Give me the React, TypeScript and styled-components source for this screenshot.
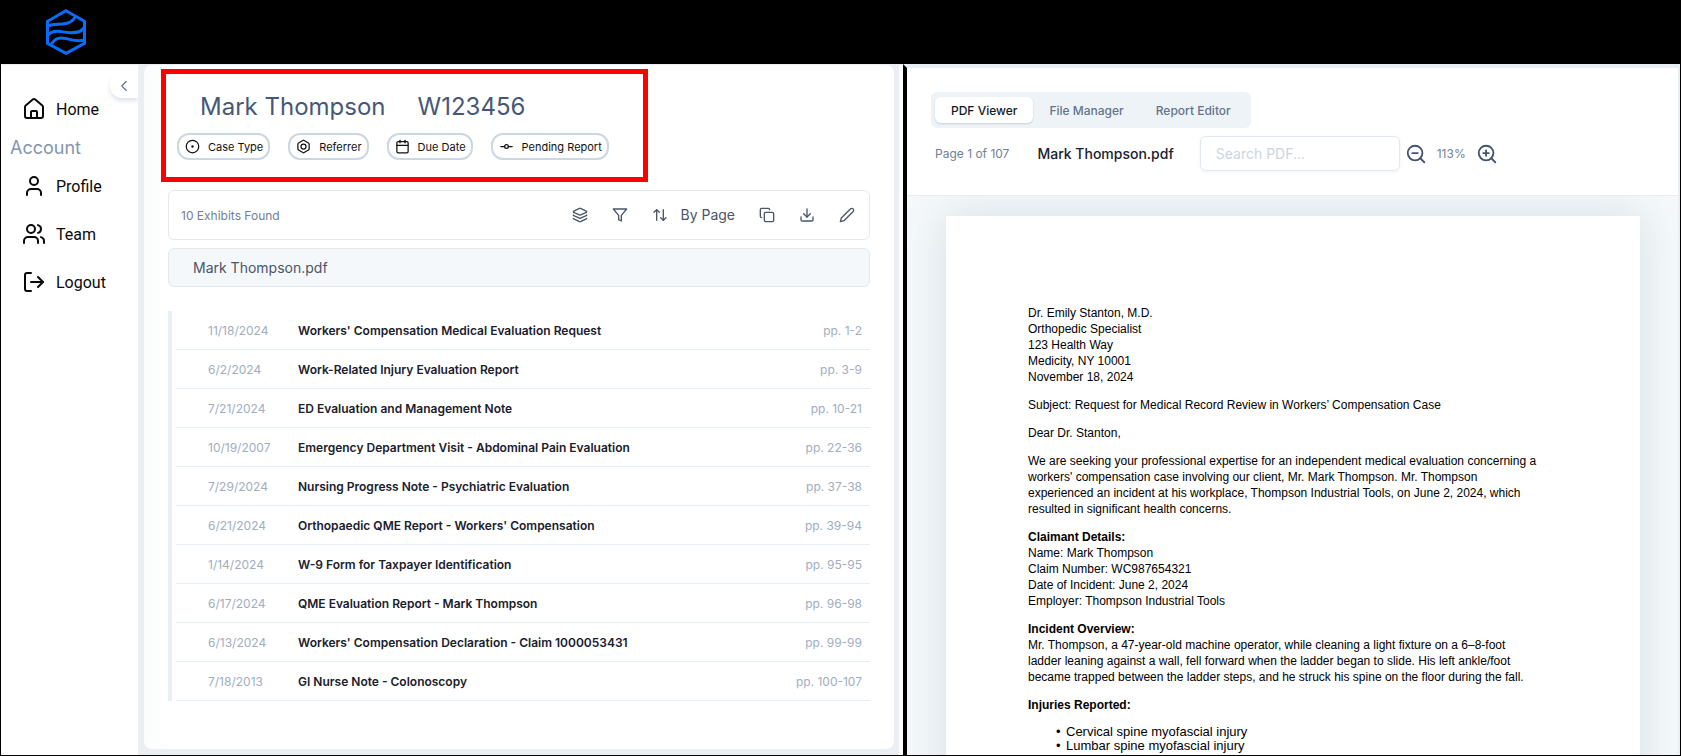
import React from "react";
import styled, { createGlobalStyle } from "styled-components";
import {
  ArrowUpDown,
  Bolt,
  Calendar,
  ChevronLeft,
  CircleDot,
  Copy,
  Download,
  GitCommitHorizontal,
  Layers,
  LogOut,
  User,
  Users,
  ZoomIn,
  ZoomOut,
} from "lucide-react";

const ui = `Inter, "Liberation Sans", sans-serif`;

const GlobalStyle = createGlobalStyle`
  * { box-sizing: border-box; }
  body { margin: 0; background: #fff; font-family: ${ui}; }
  button { font-family: inherit; cursor: pointer; }
`;

const Shell = styled.div`
  display: flex;
  flex-direction: column;
  height: 100vh;
  overflow: hidden;
`;

const TopBar = styled.header`
  flex: none;
  height: 64px;
  padding: 9px 46px;
  background: #000;
`;

const Workspace = styled.div`
  flex: 1;
  min-height: 0;
  display: grid;
  grid-template-columns: minmax(0, 902fr) minmax(0, 777fr);
  border: solid #000;
  border-width: 0 1px 1px;
`;

const LeftPane = styled.div`
  display: flex;
  min-height: 0;
  padding-right: 4px;
  border-top: 1px solid #e8edf2;
`;

const Sidebar = styled.nav`
  flex: none;
  display: flex;
  flex-direction: column;
  width: 137px;
`;

const CollapseButton = styled.button`
  display: grid;
  place-items: center;
  align-self: flex-end;
  width: 28px;
  height: 25px;
  margin-top: 8px;
  padding: 0;
  border: 0;
  border-radius: 12px 0 0 12px;
  background: #fff;
  color: #5f6f89;
  box-shadow: 0 3px 4px rgba(30, 50, 70, 0.14);
`;

const NavList = styled.ul`
  margin: 0;
  padding: 0;
  list-style: none;
`;

const NavLink = styled.a`
  display: flex;
  align-items: center;
  gap: 10px;
  height: 48px;
  padding-left: 21px;
  color: #0a0a0a;
  font-family: Roboto, sans-serif;
  font-size: 16px;
  text-decoration: none;
`;

const NavHome = styled(NavLink)`
  height: 22px;
`;

const NavHeading = styled.h2`
  margin: 16px 0 2px;
  padding-left: 9px;
  color: #8296ac;
  font-size: 18px;
  font-weight: 400;
  line-height: 24px;
`;

const Backdrop = styled.main`
  flex: 1;
  min-width: 0;
  display: flex;
  padding: 0 5px 6px 6px;
  background: #ebeff3;
`;

const CasePanel = styled.div`
  flex: 1;
  min-width: 0;
  padding: 4px 24px 0 17px;
  border-radius: 8px;
  background: linear-gradient(90deg, #fbfcfc, #fff 24px);
`;

const CaseHeader = styled.section`
  max-width: 487px;
  height: 113px;
  padding: 17px 11px;
  border: 5px solid #f00;
`;

const CaseTitle = styled.h1`
  display: flex;
  gap: 32px;
  margin: 0;
  padding-left: 23px;
  color: #475876;
  font-size: 24px;
  font-weight: 400;
  line-height: 32px;
`;

const Chips = styled.div`
  display: flex;
  gap: 18px;
  margin-top: 10px;
`;

const Chip = styled.button`
  display: flex;
  align-items: center;
  gap: 8px;
  height: 27px;
  padding: 0 5px 0 6px;
  border: 2px solid #cbd7e3;
  border-radius: 12px;
  background: #fff;
  color: #111;
  font-size: 11px;
  white-space: nowrap;
`;

const Exhibits = styled.section`
  margin: 8px 0 0 7px;
`;

const ExhibitBar = styled.div`
  display: flex;
  align-items: center;
  justify-content: space-between;
  height: 50px;
  padding: 0 14px 0 12px;
  border: 1px solid #e4e8ec;
  border-radius: 6px;
  background: #fff;
`;

const Muted = styled.span`
  color: #718096;
  font-size: 12px;
  white-space: nowrap;
`;

const Tools = styled.div`
  display: flex;
  align-items: center;
  gap: 24px;
`;

const Tool = styled.button`
  display: flex;
  align-items: center;
  gap: 12px;
  padding: 0;
  border: 0;
  background: none;
  color: #4a5568;
  font-size: 14px;
  line-height: 20px;
  white-space: nowrap;
`;

const FileRow = styled.h2`
  margin: 8px 0 0;
  padding: 0 24px;
  border: 1px solid #e2e8ee;
  border-radius: 6px;
  background: #f5f8fb;
  color: #4a5568;
  font-size: 14px;
  font-weight: 400;
  line-height: 37px;
`;

const ExhibitList = styled.div`
  margin-top: 24px;
  padding-left: 4px;
  border-left: 4px solid #e8eff5;
`;

const Table = styled.table`
  width: 100%;
  border-spacing: 0;
  font-size: 12px;
`;

const Cell = styled.td`
  height: 39px;
  padding: 0;
  border-bottom: 1px solid #e6edf3;
  color: #a0aec0;
  white-space: nowrap;
`;

const DateCell = styled(Cell)`
  width: 122px;
  padding-left: 32px;
`;

const TitleCell = styled(Cell)`
  color: #1a202c;
  font-weight: 600;
`;

const PagesCell = styled(Cell)`
  padding-right: 8px;
  text-align: right;
`;

const Viewer = styled.section`
  display: flex;
  flex-direction: column;
  min-height: 0;
  border: solid #e8eff4;
  border-width: 4px 2px 0 4px;
  border-left-color: #000;
`;

const ViewerHead = styled.div`
  flex: none;
  display: flex;
  flex-direction: column;
  align-items: flex-start;
  gap: 8px;
  padding: 24px;
  border-bottom: 1px solid #e6ecf0;
`;

const Tabs = styled.div`
  display: flex;
  padding: 5px 4px;
  border-radius: 6px;
  background: #eef3f7;
`;

const Tab = styled.button<{ $active?: boolean }>`
  height: 26px;
  padding: 0 16px;
  border: 0;
  border-radius: 6px;
  background: ${(p) => (p.$active ? "#fff" : "transparent")};
  box-shadow: ${(p) => (p.$active ? "0 1px 2px rgba(20, 40, 60, 0.18)" : "none")};
  color: ${(p) => (p.$active ? "#111827" : "#64748b")};
  font-size: 12px;
  font-weight: 500;
  white-space: nowrap;
`;

const ViewerTools = styled.div`
  display: flex;
  align-items: center;
  padding-left: 4px;
`;

const FileName = styled.span`
  margin: 0 26px 0 28px;
  color: #1a202c;
  font-size: 14px;
  font-weight: 500;
  white-space: nowrap;
`;

const SearchBox = styled.input`
  width: 200px;
  height: 35px;
  padding: 0 15px;
  border: 1px solid #e2e8f0;
  border-radius: 6px;
  background: #fff;
  box-shadow: 0 1px 4px rgba(30, 60, 90, 0.06);
  color: #1a202c;
  font-family: inherit;
  font-size: 14px;
  &::placeholder { color: #cbd5e0; }
`;

const ZoomGroup = styled.div`
  display: flex;
  align-items: center;
  gap: 10px;
  margin-left: 5px;
`;

const IconButton = styled.button`
  display: flex;
  padding: 0;
  border: 0;
  background: none;
  color: #44546f;
`;

const Canvas = styled.div`
  flex: 1;
  min-height: 0;
  overflow: hidden;
  padding: 20px 38px 0 39px;
  background: #f5f9fb;
`;

const Paper = styled.article`
  min-height: 1000px;
  padding: 89px 78px 0 82px;
  background: #fff;
  box-shadow: 0 0 40px 4px rgba(70, 100, 115, 0.15);
  color: #000;
  font-family: "Liberation Sans", Arial, sans-serif;
  font-size: 12px;
  line-height: 16px;
  white-space: nowrap;
  p { margin: 0 0 12px; }
`;

const Injuries = styled.ul`
  margin: 0;
  padding-left: 38px;
  font-size: 13px;
  line-height: 14px;
  list-style: none;
  li::before { content: "•"; display: inline-block; width: 0; margin-left: -10px; margin-right: 10px; }
`;

const Logo = () => (
  <svg width="40" height="46" viewBox="0 0 40 46" fill="none" stroke="#0a6cff" strokeWidth="3" role="img" aria-label="Logo">
    <path d="M20 1.8 38.5 12.3V34.3L20 44.4 1.5 34.3V12.3Z" />
    <path d="M1.5 17C9 14 14 16.500 21 14.300C25 13 28 10.500 29.300 7.500" />
    <path d="M1.500 26.500C4 23.500 9 21.800 15 22.600C24 24.300 35 25 38.500 18" />
    <path d="M5.500 35C8.500 29.500 14 28 20 29.600C26 31.200 32 32.800 38.500 31" />
  </svg>
);

const HomeIcon = () => (
  <svg width="24" height="24" viewBox="0 0 24 24" fill="none" stroke="currentColor" strokeWidth="2" strokeLinecap="round" strokeLinejoin="round">
    <path d="M3 10a2 2 0 0 1 .709-1.528l7-5.999a2 2 0 0 1 2.582 0l7 5.999A2 2 0 0 1 21 10v9a2 2 0 0 1-2 2H5a2 2 0 0 1-2-2z" />
    <path d="M15 21v-6a1 1 0 0 0-1-1h-4a1 1 0 0 0-1 1v6" />
  </svg>
);

const FilterIcon = () => (
  <svg width="16" height="16" viewBox="0 0 24 24" fill="none" stroke="currentColor" strokeWidth="2" strokeLinejoin="round">
    <path d="M22 3H2l8 9.460V19l4 2v-8.540z" />
  </svg>
);

const PencilIcon = () => (
  <svg width="16" height="16" viewBox="0 0 24 24" fill="none" stroke="currentColor" strokeWidth="2" strokeLinejoin="round">
    <path d="M17 3a2.850 2.830 0 1 1 4 4L7.500 20.500 2 22l1.500-5.500Z" />
  </svg>
);

const exhibits = [
  ["11/18/2024", "Workers' Compensation Medical Evaluation Request", "pp. 1-2"],
  ["6/2/2024", "Work-Related Injury Evaluation Report", "pp. 3-9"],
  ["7/21/2024", "ED Evaluation and Management Note", "pp. 10-21"],
  ["10/19/2007", "Emergency Department Visit - Abdominal Pain Evaluation", "pp. 22-36"],
  ["7/29/2024", "Nursing Progress Note - Psychiatric Evaluation", "pp. 37-38"],
  ["6/21/2024", "Orthopaedic QME Report - Workers' Compensation", "pp. 39-94"],
  ["1/14/2024", "W-9 Form for Taxpayer Identification", "pp. 95-95"],
  ["6/17/2024", "QME Evaluation Report - Mark Thompson", "pp. 96-98"],
  ["6/13/2024", "Workers' Compensation Declaration - Claim 1000053431", "pp. 99-99"],
  ["7/18/2013", "GI Nurse Note - Colonoscopy", "pp. 100-107"],
];

export default function App() {
  return (
    <Shell>
      <GlobalStyle />
      <TopBar>
        <Logo />
      </TopBar>
      <Workspace>
        <LeftPane>
          <Sidebar>
            <CollapseButton aria-label="Collapse sidebar">
              <ChevronLeft size={18} strokeWidth={1.5} />
            </CollapseButton>
            <NavHome href="#home"><HomeIcon />Home</NavHome>
            <NavHeading>Account</NavHeading>
            <NavList>
              <li><NavLink href="#profile"><User size={24} />Profile</NavLink></li>
              <li><NavLink href="#team"><Users size={24} />Team</NavLink></li>
              <li><NavLink href="#logout"><LogOut size={24} />Logout</NavLink></li>
            </NavList>
          </Sidebar>
          <Backdrop>
            <CasePanel>
              <CaseHeader>
                <CaseTitle><span>Mark Thompson</span><span>W123456</span></CaseTitle>
                <Chips>
                  <Chip><CircleDot size={15} />Case Type</Chip>
                  <Chip><Bolt size={15} />Referrer</Chip>
                  <Chip><Calendar size={15} />Due Date</Chip>
                  <Chip><GitCommitHorizontal size={15} />Pending Report</Chip>
                </Chips>
              </CaseHeader>
              <Exhibits>
                <ExhibitBar>
                  <Muted>10 Exhibits Found</Muted>
                  <Tools>
                    <Tool aria-label="Group"><Layers size={16} /></Tool>
                    <Tool aria-label="Filter"><FilterIcon /></Tool>
                    <Tool><ArrowUpDown size={16} />By Page</Tool>
                    <Tool aria-label="Copy"><Copy size={16} /></Tool>
                    <Tool aria-label="Download"><Download size={16} /></Tool>
                    <Tool aria-label="Edit"><PencilIcon /></Tool>
                  </Tools>
                </ExhibitBar>
                <FileRow>Mark Thompson.pdf</FileRow>
                <ExhibitList>
                  <Table>
                    <tbody>
                      {exhibits.map(([date, title, pages]) => (
                        <tr key={title}>
                          <DateCell>{date}</DateCell>
                          <TitleCell>{title}</TitleCell>
                          <PagesCell>{pages}</PagesCell>
                        </tr>
                      ))}
                    </tbody>
                  </Table>
                </ExhibitList>
              </Exhibits>
            </CasePanel>
          </Backdrop>
        </LeftPane>
        <Viewer>
          <ViewerHead>
            <Tabs role="tablist">
              <Tab role="tab" aria-selected $active>PDF Viewer</Tab>
              <Tab role="tab" aria-selected={false}>File Manager</Tab>
              <Tab role="tab" aria-selected={false}>Report Editor</Tab>
            </Tabs>
            <ViewerTools>
              <Muted>Page 1 of 107</Muted>
              <FileName>Mark Thompson.pdf</FileName>
              <SearchBox type="search" aria-label="Search PDF" placeholder="Search PDF..." />
              <ZoomGroup>
                <IconButton aria-label="Zoom out"><ZoomOut size={22} /></IconButton>
                <Muted>113%</Muted>
                <IconButton aria-label="Zoom in"><ZoomIn size={22} /></IconButton>
              </ZoomGroup>
            </ViewerTools>
          </ViewerHead>
          <Canvas>
            <Paper>
              <p>
                Dr. Emily Stanton, M.D.<br />
                Orthopedic Specialist<br />
                123 Health Way<br />
                Medicity, NY 10001<br />
                November 18, 2024
              </p>
              <p>Subject: Request for Medical Record Review in Workers’ Compensation Case</p>
              <p>Dear Dr. Stanton,</p>
              <p>
                We are seeking your professional expertise for an independent medical evaluation concerning a<br />
                workers' compensation case involving our client, Mr. Mark Thompson. Mr. Thompson<br />
                experienced an incident at his workplace, Thompson Industrial Tools, on June 2, 2024, which<br />
                resulted in significant health concerns.
              </p>
              <p>
                <b>Claimant Details:</b><br />
                Name: Mark Thompson<br />
                Claim Number: WC987654321<br />
                Date of Incident: June 2, 2024<br />
                Employer: Thompson Industrial Tools
              </p>
              <p>
                <b>Incident Overview:</b><br />
                Mr. Thompson, a 47-year-old machine operator, while cleaning a light fixture on a 6–8-foot<br />
                ladder leaning against a wall, fell forward when the ladder began to slide. His left ankle/foot<br />
                became trapped between the ladder steps, and he struck his spine on the floor during the fall.
              </p>
              <p><b>Injuries Reported:</b></p>
              <Injuries>
                <li>Cervical spine myofascial injury</li>
                <li>Lumbar spine myofascial injury</li>
                <li>Right shoulder myofascial and rotator cuff tendon injury, partial tear on the right</li>
              </Injuries>
            </Paper>
          </Canvas>
        </Viewer>
      </Workspace>
    </Shell>
  );
}
